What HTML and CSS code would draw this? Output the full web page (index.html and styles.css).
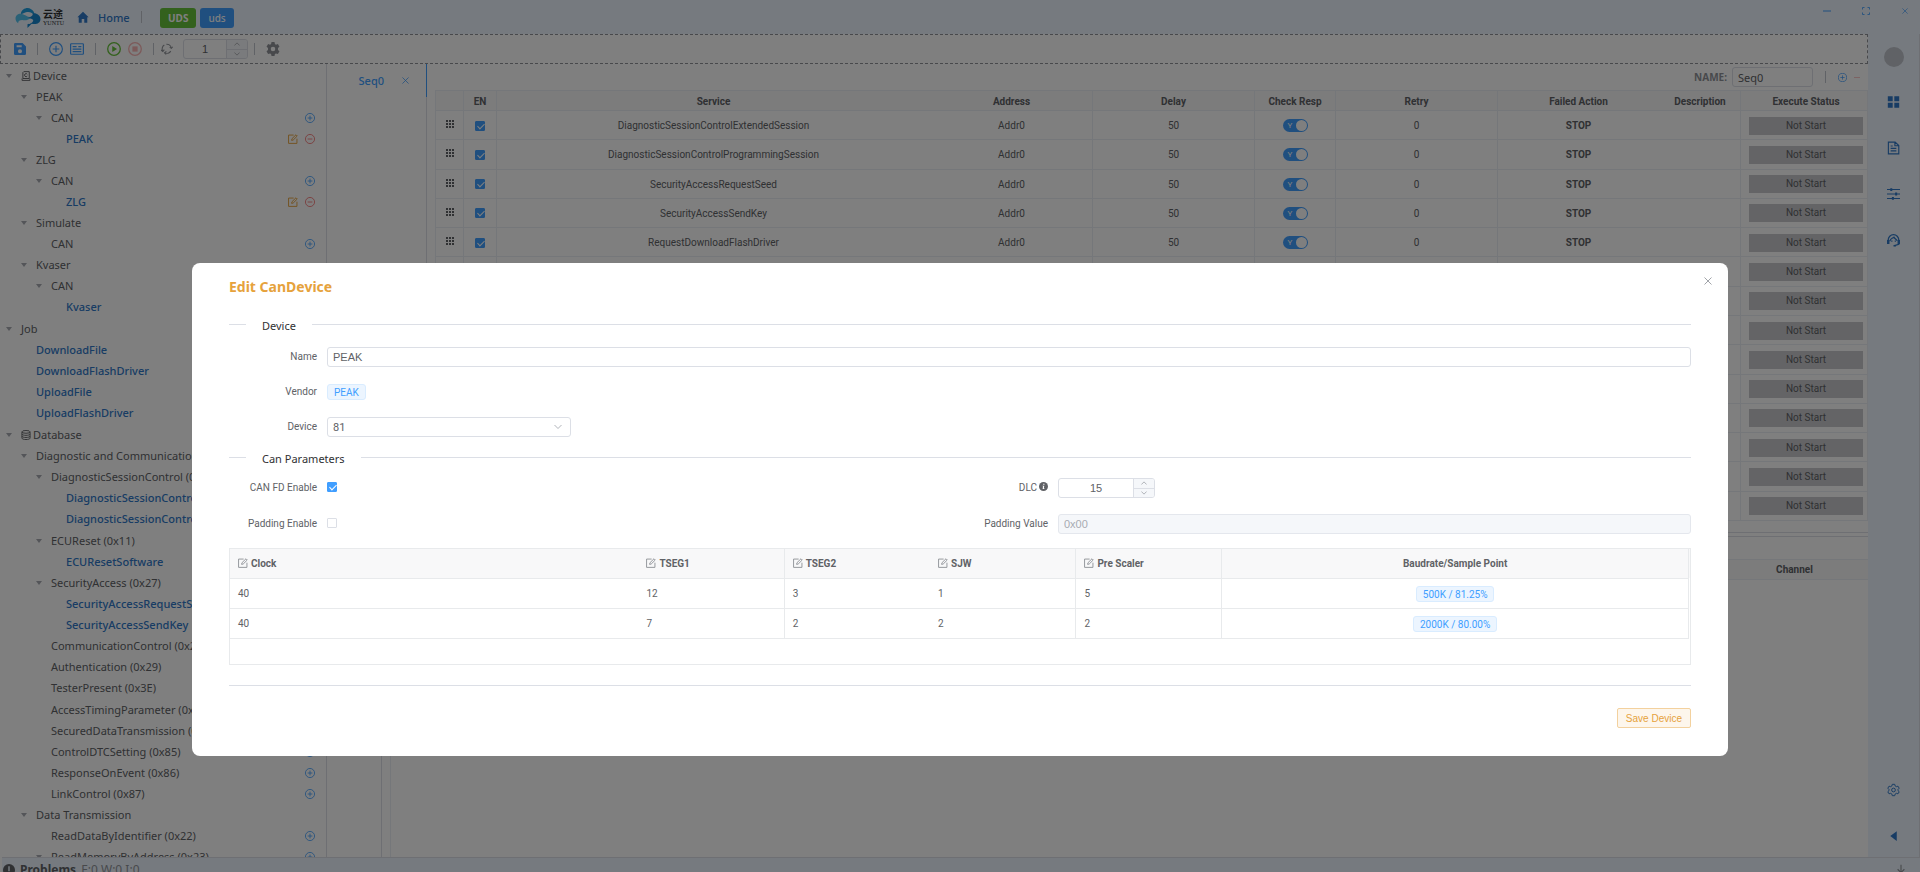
FILE: index.html
```
<!DOCTYPE html>
<html lang="en">
<head>
    <meta charset="UTF-8">
    <meta name="viewport" content="width=device-width, initial-scale=1.0">
    <title>Edit CanDevice</title>
    <link rel="stylesheet" href="styles.css">
</head>
<body>
    <!-- Icon set -->
    <svg class="sprite" aria-hidden="true">
        <symbol id="i-home" viewBox="0 0 16 16"><path fill="currentColor" d="M8 1 .5 8.200h1.800V15.500h4v-5h3.400v5h4V8.200h1.800z"/></symbol>
        <symbol id="i-save" viewBox="1 1 14 14"><path fill="currentColor" fill-rule="evenodd" d="M2.500 1H11l4 4v8.500a1.500 1.500 0 0 1-1.500 1.500h-11A1.500 1.500 0 0 1 1 13.500v-11A1.500 1.500 0 0 1 2.500 1zM4 3.500v2.500h6V3.500zm4 4.700a2.400 2.400 0 1 0 0 4.800 2.400 2.400 0 0 0 0-4.800z"/></symbol>
        <symbol id="i-plus" viewBox="0 0 16 16"><g fill="none" stroke="currentColor" stroke-width="1.300"><circle cx="8" cy="8" r="7.300"/><path d="M8 4.200v7.600M4.200 8h7.600"/></g></symbol>
        <symbol id="i-minus" viewBox="0 0 16 16"><g fill="none" stroke="currentColor" stroke-width="1.300"><circle cx="8" cy="8" r="7.300"/><path d="M4.200 8h7.600"/></g></symbol>
        <symbol id="i-card" viewBox="0 0 16 16"><g fill="none" stroke="currentColor" stroke-width="1.400"><rect x=".7" y="2" width="14.600" height="12" rx=".8"/><path d="M3 5.200h4.500M3 8.200h10M3 11h10M9.500 5.200H13"/></g></symbol>
        <symbol id="i-play" viewBox="0 0 16 16"><circle cx="8" cy="8" r="7.200" fill="none" stroke="currentColor" stroke-width="1.500"/><path fill="currentColor" d="M6 4.500v7L11.500 8z"/></symbol>
        <symbol id="i-stop" viewBox="0 0 16 16"><circle cx="8" cy="8" r="7.200" fill="none" stroke="currentColor" stroke-width="1.500"/><path fill="currentColor" d="M5 5h6v6H5z"/></symbol>
        <symbol id="i-cycle" viewBox="1 1 14.500 14.500"><g fill="none" stroke="currentColor" stroke-width="1.300"><path d="M3.200 11A5.500 5.500 0 0 1 5 3.400M7.500 2.500a5.500 5.500 0 0 1 5.900 4.800M12.800 10.800a5.500 5.500 0 0 1-7.300 2"/><path d="M1 9.500 3.200 11.300 5 9M11.500 6l2 1.500L15.200 5.500M7.500 11.200 5.300 12.900l1.900 2"/></g></symbol>
        <symbol id="i-gear" viewBox="0 0 16 16"><path fill="currentColor" fill-rule="evenodd" d="M6.300 0h3.400l.5 2.300 1.200.7L13.600 2.300l1.800 3-1.700 1.600v2.200l1.700 1.600-1.800 3-2.200-.7-1.200.7L9.700 16H6.300l-.5-2.300-1.200-.7-2.200.7-1.800-3 1.700-1.600V6.900L.6 5.300l1.800-3 2.200.7 1.200-.7zM8 5.400a2.600 2.600 0 1 0 0 5.200 2.600 2.600 0 0 0 0-5.200z"/></symbol>
        <symbol id="i-setting" viewBox="0 0 16 16"><g fill="none" stroke="currentColor" stroke-width="1.200"><path d="M6.500 1h3l.5 2 1.500.9 2-.6 1.500 2.500L13.600 7.200v1.700l1.400 1.300-1.500 2.500-2-.6-1.500.9-.5 2h-3l-.5-2-1.500-.9-2 .6L1 10.200l1.400-1.300V7.200L1 5.800l1.500-2.500 2 .6L6 3z"/><circle cx="8" cy="8" r="2.300"/></g></symbol>
        <symbol id="i-edit" viewBox="0 0 16 16"><g fill="none" stroke="currentColor" stroke-width="1.500"><path d="M9 1.700H.9v13.300H14.300V7.500M5.800 10.200l.5-2.600 6.500-6.400 2 2-6.500 6.400z"/></g></symbol>
        <symbol id="i-chip" viewBox="0 0 16 16"><g fill="none" stroke="currentColor" stroke-width="1.500"><path d="M3 12V2.500L4.500 1h8.700v11z"/><path d="M1.700 12v3h12.600v-3M10 5.200A2.400 2.400 0 1 0 10 8"/></g></symbol>
        <symbol id="i-db" viewBox="0 0 16 16"><g fill="none" stroke="currentColor" stroke-width="1.500"><ellipse cx="8" cy="3" rx="6.500" ry="2.200"/><path d="M1.500 3v10c0 3 13 3 13 0V3M1.500 6.300c0 3 13 3 13 0M1.500 9.700c0 3 13 3 13 0"/></g></symbol>
        <symbol id="i-close" viewBox="0 0 16 16"><path fill="none" stroke="currentColor" stroke-width="1.700" d="m1 1 14 14M15 1 1 15"/></symbol>
        <symbol id="i-line" viewBox="0 0 16 16"><path fill="none" stroke="currentColor" stroke-width="2" d="M0 8h16"/></symbol>
        <symbol id="i-full" viewBox="0 0 16 16"><path fill="none" stroke="currentColor" stroke-width="1.700" d="M1 5V1h4M11 1h4v4M15 11v4h-4M5 15H1v-4"/></symbol>
        <symbol id="i-drag" viewBox="0 0 8 8"><path fill="currentColor" d="M0 0h2v2H0zM3 0h2v2H3zM6 0h2v2H6zM0 3h2v2H0zM3 3h2v2H3zM6 3h2v2H6zM0 6h2v2H0zM3 6h2v2H3zM6 6h2v2H6z"/></symbol>
        <symbol id="i-grid" viewBox="0 0 16 16"><path fill="currentColor" d="M1 1h6v6H1zM9 1h6v6H9zM1 9h6v6H1zM9 9h6v6H9z"/></symbol>
        <symbol id="i-doc" viewBox="0 0 16 16"><path fill="none" stroke="currentColor" stroke-width="1.400" d="M1.700.8h8.300L14.500 5v10.200H1.700zM9.700 1v4.200h4.500M4.500 5.500H7M4.500 8.500h7M4.500 11.500h7"/></symbol>
        <symbol id="i-sliders" viewBox="0 0 16 16"><path fill="none" stroke="currentColor" stroke-width="1.300" d="M0 2.500h16M0 8h16M0 13.500h16"/><path fill="currentColor" d="M4 .8h2.500v3.400H4zM10 6.300h2.500v3.400H10zM6 11.800h2.500v3.400H6z"/></symbol>
        <symbol id="i-service" viewBox="0 0 16 16"><g fill="none" stroke="currentColor" stroke-width="1.600"><path d="M1.500 12.500V8a6.500 6.500 0 0 1 13 0v5.300L9 15M3.500 9.500C4 6 6 6.500 8.500 4.500c1 2 3 2.500 4 4.500"/></g><path fill="currentColor" d="M0 8h3v5H0zM13 8h3v5h-3zM5.200 8.500h1.500V10H5.200zM9.500 8.500H11V10H9.500zM8 14h3v2H8z"/></symbol>
        <symbol id="i-left" viewBox="0 0 16 16"><path fill="currentColor" d="M12 2v12L4 8z"/></symbol>
        <symbol id="i-up" viewBox="0 0 16 16"><path fill="none" stroke="currentColor" stroke-width="1.800" d="m1 12 7-7 7 7"/></symbol>
        <symbol id="i-down" viewBox="0 0 16 16"><path fill="none" stroke="currentColor" stroke-width="1.800" d="m1 4 7 7 7-7"/></symbol>
        <symbol id="i-info" viewBox="0 0 16 16"><circle cx="8" cy="8" r="8" fill="currentColor"/><path fill="#fff" d="M7.500 3h2.200v2H7.500zM6.200 6.500h3.200l-.8 4.800h1v1.200H6.400l.8-4.800h-1z"/></symbol>
        <symbol id="i-warn" viewBox="0 0 16 16"><circle cx="8" cy="8" r="8" fill="currentColor"/><path fill="#ecf5ff" d="M7 3h2v6.500H7zM7 11h2v2H7z"/></symbol>
        <symbol id="i-download" viewBox="0 0 16 16"><path fill="none" stroke="currentColor" stroke-width="1.500" d="M8 1v10M3.500 7 8 11.500 12.500 7M2 15h12"/></symbol>
    </svg>

    <header class="top-bar">
        <div class="logo">
            <svg viewBox="0 0 50 40">
                <path fill="#1f9fe0" d="M11 13C13 3 24-1 31 4c5 3 7 7 6 12-3-5-9-8-16-6-4 1-7 4-10 3z"/>
                <path fill="#55c3ee" d="M1 22c0-8 8-11 15-8 7 2 9 7 16 4-5 8-13 8-18 7-5 0-8 2-8 6-3-2-5-5-5-9z"/>
                <path fill="#1787cf" d="M24 21c6-1 11-4 10-9 8-1 15 4 15 11 0 9-9 11-17 9l-8 8v-7c5 0 11-3 11-8-3-3-7-4-11-4z"/>
            </svg>
            <div class="logo-name"><b>云途</b><small>YUNTU</small></div>
        </div>
        <a class="home" href="#"><svg><use href="#i-home"/></svg>Home</a>
        <span class="bar-line"></span>
        <div class="projects">
            <button class="project green">UDS</button>
            <button class="project blue">uds</button>
        </div>
        <div class="window-btns">
            <button aria-label="Minimize"><svg><use href="#i-line"/></svg></button>
            <button aria-label="Maximize"><svg><use href="#i-full"/></svg></button>
            <button aria-label="Close"><svg><use href="#i-close"/></svg></button>
        </div>
    </header>

    <div class="body">
        <div class="work">
            <div class="toolbar">
                <button class="tool blue" aria-label="Save"><svg class="sm"><use href="#i-save"/></svg></button>
                <span class="bar-line"></span>
                <button class="tool blue" aria-label="Add"><svg><use href="#i-plus"/></svg></button>
                <button class="tool blue" aria-label="List"><svg><use href="#i-card"/></svg></button>
                <span class="bar-line"></span>
                <button class="tool green" aria-label="Run"><svg><use href="#i-play"/></svg></button>
                <button class="tool red" aria-label="Stop" disabled><svg><use href="#i-stop"/></svg></button>
                <span class="bar-line"></span>
                <div class="cycles">
                    <span class="tool gray"><svg class="sm"><use href="#i-cycle"/></svg></span>
                    <div class="number small">
                        <input type="number" value="1" aria-label="Cycles">
                        <div class="steps">
                            <button aria-label="Increase"><svg><use href="#i-up"/></svg></button>
                            <button aria-label="Decrease"><svg><use href="#i-down"/></svg></button>
                        </div>
                    </div>
                </div>
                <span class="bar-line"></span>
                <button class="tool gray" aria-label="Settings"><svg><use href="#i-gear"/></svg></button>
            </div>

            <div class="panes">
                <nav class="tree" id="tree"></nav>

                <div class="editor">
                    <section class="seq-pane">
                        <div class="seq-tabs">
                            <button class="seq-tab">Seq0 <svg><use href="#i-close"/></svg></button>
                        </div>
                        <div class="seq-content">
                            <div class="seq-head">
                                <label for="seqName">NAME:</label>
                                <input type="text" id="seqName" value="Seq0">
                                <span class="bar-line"></span>
                                <button class="seq-btn blue" aria-label="Add"><svg><use href="#i-plus"/></svg></button>
                                <button class="seq-btn red" aria-label="Remove" disabled><svg><use href="#i-line"/></svg></button>
                            </div>
                            <table class="seq-table">
                                <colgroup>
                                    <col class="c-drag"><col class="c-en"><col><col class="c-mid"><col class="c-mid"><col class="c-short"><col class="c-mid"><col class="c-mid"><col class="c-short"><col class="c-status">
                                </colgroup>
                                <thead>
                                    <tr><th></th><th>EN</th><th class="open">Service</th><th>Address</th><th>Delay</th><th>Check Resp</th><th>Retry</th><th class="open">Failed Action</th><th>Description</th><th class="last">Execute Status</th></tr>
                                </thead>
                                <tbody id="seqRows"></tbody>
                            </table>
                        </div>
                    </section>
                    <section class="log-pane">
                        <div class="log-tabs"></div>
                        <div class="log-content">
                            <table class="log-table">
                                <colgroup><col><col class="c-channel"></colgroup>
                                <thead><tr><th></th><th>Channel</th></tr></thead>
                            </table>
                        </div>
                    </section>
                </div>
            </div>
        </div>

        <aside class="side-bar">
            <span class="avatar"></span>
            <button aria-label="Apps"><svg><use href="#i-grid"/></svg></button>
            <button aria-label="Document"><svg><use href="#i-doc"/></svg></button>
            <button aria-label="Options"><svg><use href="#i-sliders"/></svg></button>
            <button aria-label="Support"><svg><use href="#i-service"/></svg></button>
            <div class="side-bottom">
                <button aria-label="Settings"><svg><use href="#i-setting"/></svg></button>
                <button aria-label="Collapse"><svg><use href="#i-left"/></svg></button>
            </div>
        </aside>
    </div>

    <footer class="status-bar">
        <svg><use href="#i-warn"/></svg>
        <b>Problems</b>
        <span>E:0 W:0 I:0</span>
        <button aria-label="Download"><svg><use href="#i-download"/></svg></button>
    </footer>

    <div class="overlay">
        <form class="dialog" role="dialog" aria-labelledby="dialogTitle">
            <button type="button" class="dialog-close" aria-label="Close"><svg><use href="#i-close"/></svg></button>
            <h2 id="dialogTitle">Edit CanDevice</h2>

            <div class="divider"><span>Device</span></div>
            <div class="fields">
                <div class="field">
                    <label for="name">Name</label>
                    <input type="text" id="name" value="PEAK">
                </div>
                <div class="field">
                    <span class="label">Vendor</span>
                    <span class="tag">PEAK</span>
                </div>
                <div class="field">
                    <label for="device">Device</label>
                    <div class="select">
                        <select id="device"><option>81</option></select>
                        <svg><use href="#i-down"/></svg>
                    </div>
                </div>
            </div>

            <div class="divider"><span>Can Parameters</span></div>
            <div class="fields two">
                <div class="field">
                    <label for="canFd">CAN FD Enable</label>
                    <input type="checkbox" id="canFd" checked>
                </div>
                <div class="field">
                    <label for="dlc">DLC<svg><use href="#i-info"/></svg></label>
                    <div class="number">
                        <input type="number" id="dlc" value="15">
                        <div class="steps">
                            <button type="button" aria-label="Increase"><svg><use href="#i-up"/></svg></button>
                            <button type="button" aria-label="Decrease"><svg><use href="#i-down"/></svg></button>
                        </div>
                    </div>
                </div>
                <div class="field">
                    <label for="padding">Padding Enable</label>
                    <input type="checkbox" id="padding">
                </div>
                <div class="field">
                    <label for="paddingValue">Padding Value</label>
                    <input type="text" id="paddingValue" value="0x00" disabled>
                </div>
            </div>

            <div class="baud-box">
                <table class="baud-table">
                    <thead>
                        <tr>
                            <th class="clock open"><svg><use href="#i-edit"/></svg>Clock</th>
                            <th><svg><use href="#i-edit"/></svg>TSEG1</th>
                            <th class="open"><svg><use href="#i-edit"/></svg>TSEG2</th>
                            <th><svg><use href="#i-edit"/></svg>SJW</th>
                            <th><svg><use href="#i-edit"/></svg>Pre Scaler</th>
                            <th class="rate">Baudrate/Sample Point</th>
                        </tr>
                    </thead>
                    <tbody>
                        <tr><td class="open">40</td><td>12</td><td class="open">3</td><td>1</td><td>5</td><td class="rate"><span class="tag">500K / 81.25%</span></td></tr>
                        <tr><td class="open">40</td><td>7</td><td class="open">2</td><td>2</td><td>2</td><td class="rate"><span class="tag">2000K / 80.00%</span></td></tr>
                    </tbody>
                </table>
            </div>

            <hr>
            <div class="dialog-footer"><button type="submit" class="save-btn">Save Device</button></div>
        </form>
    </div>

    <script src="script.js"></script>
</body>
</html>
```
FILE: styles.css
```
* {
    margin: 0;
    padding: 0;
    box-sizing: border-box;
}

body {
    height: 100vh;
    display: flex;
    flex-direction: column;
    overflow: hidden;
    background: #fff;
    color: #606266;
    font-family: 'Noto Sans', 'Noto Sans CJK SC', sans-serif;
    font-size: 11px;
}

button,
input,
select {
    font: inherit;
    color: inherit;
    background: none;
    border: none;
    outline: none;
}

button {
    cursor: pointer;
}

svg {
    display: block;
    flex: none;
}

.sprite {
    position: absolute;
    width: 0;
    height: 0;
}

.blue { color: #409eff; }
.green { color: #67c23a; }
.red { color: #f56c6c; }
.orange { color: #e6a23c; }
.gray { color: #909399; }
button:disabled { opacity: 0.5; }

.bar-line {
    width: 1px;
    height: 12px;
    background: #c0c4cc;
}

/* Top bar */
.top-bar {
    flex: none;
    height: 34px;
    padding: 0 8px 0 15px;
    display: flex;
    align-items: center;
    background: #ecf5ff;
}

.logo {
    display: flex;
    align-items: center;
    gap: 2px;
    width: 62px;
}

.logo > svg {
    width: 26px;
    height: 21px;
}

.logo-name {
    display: flex;
    flex-direction: column;
    color: #303133;
}

.logo-name b {
    font-size: 10px;
    line-height: 11px;
}

.logo-name small {
    font-family: 'Liberation Serif', serif;
    font-size: 6px;
    line-height: 6px;
}

.home {
    width: 64px;
    display: flex;
    align-items: center;
    gap: 9px;
    font-weight: 500;
    color: #3078c8;
    text-decoration: none;
}

.home svg {
    width: 12px;
    height: 12px;
}

.projects {
    display: flex;
    gap: 4px;
    margin: 2px 0 0 18px;
}

.project {
    height: 20px;
    padding: 0 8px;
    border-radius: 3px;
    color: #fff;
    font-size: 10px;
}

.project.green {
    background: #67c23a;
    font-weight: 700;
}

.project.blue {
    background: #409eff;
    font-weight: 500;
}

.window-btns {
    display: flex;
    gap: 25px;
    margin-left: auto;
    align-self: flex-start;
    color: #409eff;
}

.window-btns button {
    width: 14px;
    height: 22px;
}

.window-btns svg {
    width: 8px;
    height: 8px;
    margin: 0 auto;
}

.window-btns button:last-child svg {
    width: 6px;
}

/* Toolbar */
.body {
    flex: 1;
    min-height: 0;
    display: flex;
}

.work {
    flex: 1;
    min-width: 0;
    display: flex;
    flex-direction: column;
}

.toolbar {
    flex: none;
    height: 30px;
    padding: 0 13px;
    display: flex;
    align-items: center;
    gap: 11px;
    border: 1px dashed #909399;
}

.tool svg {
    width: 14px;
    height: 14px;
}

.tool svg.sm {
    width: 12px;
    height: 12px;
}

.tool + .tool {
    margin-left: -4px;
}

.cycles {
    display: flex;
    align-items: center;
    gap: 10px;
    margin: 0 -5px 0 -4px;
}

.number {
    display: flex;
    width: 97px;
    height: 20px;
    border: 1px solid #dcdfe6;
    border-radius: 3px;
    overflow: hidden;
}

.number.small {
    width: 65px;
}

.number input {
    flex: 1;
    min-width: 0;
    text-align: center;
    font-family: 'Liberation Sans', sans-serif;
    appearance: textfield;
}

.number input::-webkit-inner-spin-button {
    appearance: none;
}

.steps {
    width: 21px;
    display: flex;
    flex-direction: column;
    border-left: 1px solid #dcdfe6;
    background: #f5f7fa;
    color: #909399;
}

.steps button {
    flex: 1;
    display: flex;
    align-items: center;
    justify-content: center;
}

.steps button + button {
    border-top: 1px solid #dcdfe6;
}

.steps svg {
    width: 6px;
    height: 6px;
}

/* Tree */
.panes {
    flex: 1;
    min-height: 0;
    display: flex;
}

.tree {
    width: 327px;
    padding-top: 1px;
    overflow: hidden;
    border-right: 1px solid #dcdfe6;
}

.tree ul {
    list-style: none;
    margin-bottom: 1px;
}

.node {
    height: 21px;
    padding: 0 11px 0 6px;
    display: flex;
    align-items: center;
    white-space: nowrap;
}

.node.leaf {
    color: #3078c8;
    font-weight: 500;
}

.d1 { padding-left: 21px; }
.d2 { padding-left: 36px; }
.d3 { padding-left: 51px; }

.arrow {
    flex: none;
    width: 15px;
}

.arrow.open::before {
    content: '';
    display: block;
    width: 0;
    border: 3px solid transparent;
    border-top: 4px solid #a8abb2;
    border-bottom: none;
}

.node > svg {
    width: 10px;
    height: 10px;
    margin-right: 2px;
}

.node-btns {
    margin-left: auto;
    display: flex;
    gap: 7px;
}

.node-btns svg {
    width: 10px;
    height: 10px;
}

/* Sequence editor */
.editor {
    flex: 1;
    min-width: 0;
    display: flex;
    flex-direction: column;
}

.seq-pane {
    height: 469px;
    display: flex;
    border-bottom: 1px solid #dcdfe6;
}

.seq-tabs {
    width: 100px;
    border-right: 1px solid #dcdfe6;
}

.seq-tab {
    width: 100px;
    height: 33px;
    padding-right: 17px;
    display: flex;
    align-items: center;
    justify-content: flex-end;
    gap: 18px;
    border-right: 1px solid #409eff;
    color: #409eff;
    font-weight: 500;
}

.seq-tab svg {
    width: 7px;
    height: 7px;
}

.seq-content {
    flex: 1;
    min-width: 0;
    padding-left: 8px;
}

.seq-head {
    height: 26px;
    padding-right: 8px;
    display: flex;
    align-items: center;
    justify-content: flex-end;
}

.seq-head label {
    color: #909399;
    font-weight: 700;
    font-size: 10px;
    margin-right: 5px;
}

.seq-head input {
    width: 81px;
    height: 20px;
    margin-right: 12px;
    padding: 0 5px;
    border: 1px solid #dcdfe6;
    border-radius: 3px;
}

.seq-head .bar-line {
    margin-right: 12px;
}

.seq-btn {
    margin-right: 7px;
}

.seq-btn svg {
    width: 9px;
    height: 9px;
}

.seq-btn.red {
    margin-right: 0;
}

.seq-btn.red svg {
    width: 6px;
}

.seq-table,
.log-table,
.baud-table {
    width: 100%;
    border-collapse: collapse;
    table-layout: fixed;
    font-family: Roboto, sans-serif;
    font-size: 10px;
}

.seq-table {
    height: 431px;
    text-align: center;
}

.seq-table th,
.seq-table td {
    padding-top: 1px;
    border: 1px solid #ebeef5;
}

.seq-table th,
.log-table th {
    height: 20px;
    background: #f8f8f9;
}

.seq-table .open {
    border-right-color: transparent;
}

.seq-table .last {
    padding-left: 4px;
}

.c-drag { width: 28px; }
.c-en { width: 33px; }
.c-mid { width: 162px; }
.c-short { width: 81px; }
.c-status { width: 127px; }

.seq-table td svg {
    width: 8px;
    height: 8px;
    margin: 0 auto 3px;
}

input[type="checkbox"] {
    appearance: none;
    width: 10px;
    height: 10px;
    display: block;
    border: 1px solid #dcdfe6;
    border-radius: 1px;
    background: #fff;
}

input[type="checkbox"]:checked {
    background: #409eff;
    border-color: #409eff;
}

input[type="checkbox"]:checked::after {
    content: '';
    display: block;
    width: 3px;
    height: 6px;
    margin-left: 3px;
    border: solid #fff;
    border-width: 0 1px 1px 0;
    transform: rotate(45deg);
}

.seq-table input {
    margin: 0 auto;
}

.switch {
    width: 25px;
    height: 13px;
    margin: 0 auto;
    padding: 1px 1px 1px 5px;
    display: flex;
    align-items: center;
    justify-content: space-between;
    border-radius: 7px;
    background: #409eff;
    color: #fff;
    font-size: 8px;
    line-height: 11px;
}

.switch input[type="checkbox"] {
    width: 11px;
    height: 11px;
    margin: 0;
    border: none;
    border-radius: 50%;
    background: #fff;
}

.switch input[type="checkbox"]::after {
    display: none;
}

.status {
    width: 114px;
    height: 18px;
    margin: 0 auto;
    line-height: 18px;
    background: #c8c9cc;
}

.log-pane {
    flex: 1;
    min-height: 0;
    margin-top: 3px;
    display: flex;
    border-top: 1px solid #dcdfe6;
}

.log-tabs {
    width: 55px;
    border-right: 1px solid #dcdfe6;
}

.log-content {
    flex: 1;
    margin-left: 8px;
    padding-top: 22px;
    border-left: 1px solid #ebeef5;
}

.log-table th {
    border: solid #ebeef5;
    border-width: 1px 0;
}

.c-channel { width: 147px; }

/* Side bar */
.side-bar {
    width: 52px;
    padding: 13px 0 14px;
    display: flex;
    flex-direction: column;
    align-items: center;
    gap: 32px;
    background: #ecf5ff;
    border-right: 1px solid #dcdfe6;
    color: #3078c8;
}

.avatar {
    width: 20px;
    height: 20px;
    margin-bottom: -4px;
    border-radius: 50%;
    background: #c0c4cc;
}

.side-bar svg {
    width: 13px;
    height: 14px;
}

.side-bottom {
    margin-top: auto;
    display: flex;
    flex-direction: column;
    gap: 32px;
}

/* Status bar */
.status-bar {
    flex: none;
    height: 26px;
    margin: 0 0 -11px 2px;
    padding: 0 13px 2px 1px;
    display: flex;
    align-items: center;
    gap: 5px;
    border-top: 1px solid #dcdfe6;
    background: #ecf5ff;
    color: #909399;
    font-size: 12px;
}

.status-bar > svg {
    width: 12px;
    height: 12px;
    color: #606266;
}

.status-bar b {
    color: #606266;
}

.status-bar button {
    margin-left: auto;
}

.status-bar button svg {
    width: 12px;
    height: 12px;
}

/* Dialog */
.overlay {
    position: fixed;
    inset: 0;
    padding-top: 263px;
    background: rgba(0, 0, 0, 0.5);
}

.dialog {
    position: relative;
    width: 80%;
    margin: 0 auto;
    padding: 13px 37px 28px;
    border-radius: 8px;
    background: #fff;
}

.dialog h2 {
    font-size: 14px;
    line-height: 22px;
    color: #e6a23c;
}

.dialog-close {
    position: absolute;
    top: 14px;
    right: 16px;
    color: #909399;
}

.dialog-close svg {
    width: 8px;
    height: 8px;
}

.divider {
    display: flex;
    align-items: center;
    gap: 16px;
    height: 18px;
    margin-top: 17px;
    color: #303133;
}

.divider span {
    padding-top: 2px;
}

.divider::before,
.divider::after {
    content: '';
    width: 17px;
    height: 1px;
    background: #dcdfe6;
}

.divider::after {
    flex: 1;
}

.fields {
    display: grid;
    gap: 15px;
    margin-top: 14px;
}

.fields + .divider {
    margin-top: 11px;
}

.fields.two {
    grid-template-columns: 1fr 1fr;
    gap: 16px 0;
    margin-top: 12px;
}

.field {
    height: 20px;
    display: flex;
    align-items: center;
    gap: 10px;
}

.field label,
.field .label {
    width: 88px;
    padding-bottom: 2px;
    display: flex;
    justify-content: flex-end;
    font-family: Roboto, sans-serif;
    font-size: 10px;
}

.field label svg {
    width: 9px;
    height: 9px;
    margin-left: 2px;
}

.field input[type="text"] {
    flex: 1;
    height: 20px;
    padding: 0 5px;
    border: 1px solid #dcdfe6;
    border-radius: 3px;
    font-family: 'Liberation Sans', sans-serif;
}

.field input:disabled {
    background: #f5f7fa;
    border-color: #e4e7ed;
    color: #a8abb2;
}

.field input[type="checkbox"] {
    margin-bottom: 2px;
}

.select {
    width: 244px;
    height: 20px;
    padding-right: 8px;
    display: flex;
    align-items: center;
    border: 1px solid #dcdfe6;
    border-radius: 3px;
}

.select select {
    flex: 1;
    padding-left: 5px;
    appearance: none;
    font-family: Roboto, sans-serif;
}

.select svg {
    width: 8px;
    height: 8px;
    color: #a8abb2;
}

.tag {
    display: inline-block;
    height: 16px;
    padding: 0 6px;
    border: 1px solid #d9ecff;
    border-radius: 3px;
    background: #ecf5ff;
    color: #409eff;
    font-family: Roboto, sans-serif;
    font-size: 10px;
    line-height: 15px;
}

.baud-box {
    min-height: 117px;
    margin-top: 14px;
    padding-right: 1px;
    border: 1px solid #e8eaec;
    background: linear-gradient(#f8f8f9 29px, #fff 29px);
}

.baud-table th,
.baud-table td {
    height: 30px;
    padding: 1px 0 0 8px;
    border: solid #e8eaec;
    border-width: 0 1px 1px 0;
    text-align: left;
}

.baud-table th {
    height: 29px;
}

.baud-table .open {
    border-right: none;
}

.baud-table .clock {
    width: 28%;
}

.baud-table .rate {
    width: 32%;
    padding-left: 0;
    text-align: center;
}

.baud-table th svg {
    display: inline-block;
    width: 10px;
    height: 10px;
    margin-right: 3px;
    vertical-align: -1px;
    color: #909399;
}

hr {
    margin-top: 20px;
    border: none;
    border-top: 1px solid #dcdfe6;
}

.dialog-footer {
    display: flex;
    justify-content: flex-end;
    margin-top: 22px;
}

.save-btn {
    height: 20px;
    padding: 0 8px;
    border: 1px solid #f3d19e;
    border-radius: 2px;
    background: #fdf6ec;
    color: #e6a23c;
    font-family: 'Liberation Sans', sans-serif;
    font-size: 10px;
}
```
FILE: script.js
```
const icon = name => `<svg><use href="#i-${name}"/></svg>`;

// [depth, text, kind]; kinds: open = expanded, add = plus button, dev = edit + remove, leaf = link item
const groups = [
    [
        [0, 'Device', 'open chip'],
        [1, 'PEAK', 'open'], [2, 'CAN', 'open add'], [3, 'PEAK', 'leaf dev'],
        [1, 'ZLG', 'open'], [2, 'CAN', 'open add'], [3, 'ZLG', 'leaf dev'],
        [1, 'Simulate', 'open'], [2, 'CAN', 'add'],
        [1, 'Kvaser', 'open'], [2, 'CAN', 'open add'], [3, 'Kvaser', 'leaf dev']
    ],
    [
        [0, 'Job', 'open'],
        [1, 'DownloadFile', 'leaf'], [1, 'DownloadFlashDriver', 'leaf'],
        [1, 'UploadFile', 'leaf'], [1, 'UploadFlashDriver', 'leaf']
    ],
    [
        [0, 'Database', 'open db'],
        [1, 'Diagnostic and Communication', 'open'],
        [2, 'DiagnosticSessionControl (0x10)', 'open add'],
        [3, 'DiagnosticSessionControl', 'leaf dev'],
        [3, 'DiagnosticSessionControl', 'leaf dev']
    ],
    [
        [2, 'ECUReset (0x11)', 'open add'], [3, 'ECUResetSoftware', 'leaf dev'],
        [2, 'SecurityAccess (0x27)', 'open add'],
        [3, 'SecurityAccessRequestSeed', 'leaf dev'], [3, 'SecurityAccessSendKey', 'leaf dev'],
        [2, 'CommunicationControl (0x28)', 'add'], [2, 'Authentication (0x29)', 'add'],
        [2, 'TesterPresent (0x3E)', 'add']
    ],
    [
        [2, 'AccessTimingParameter (0x83)', 'add'],
        [2, 'SecuredDataTransmission (0x84)', 'add'], [2, 'ControlDTCSetting (0x85)', 'add'],
        [2, 'ResponseOnEvent (0x86)', 'add'], [2, 'LinkControl (0x87)', 'add'],
        [1, 'Data Transmission', 'open'], [2, 'ReadDataByIdentifier (0x22)', 'add'],
        [2, 'ReadMemoryByAddress (0x23)', 'open add']
    ]
];

function treeNode([depth, text, kind]) {
    const has = k => kind.split(' ').includes(k);
    let btns = '';
    if (has('add')) btns = `<button class="blue" aria-label="Add">${icon('plus')}</button>`;
    if (has('dev')) {
        btns = `<button class="orange" aria-label="Edit">${icon('edit')}</button>
                <button class="red" aria-label="Remove">${icon('minus')}</button>`;
    }
    return `<li class="node d${depth} ${has('leaf') ? 'leaf' : ''}">
        <span class="arrow ${has('open') ? 'open' : ''}"></span>
        ${has('chip') ? icon('chip') : ''}${has('db') ? icon('db') : ''}
        <span>${text}</span><span class="node-btns">${btns}</span></li>`;
}

document.getElementById('tree').innerHTML =
    groups.map(g => `<ul>${g.map(treeNode).join('')}</ul>`).join('');

const services = [
    'DiagnosticSessionControlExtendedSession', 'DiagnosticSessionControlProgrammingSession',
    'SecurityAccessRequestSeed', 'SecurityAccessSendKey', 'RequestDownloadFlashDriver',
    '', '', '', '', '', '', '', '', ''
];

document.getElementById('seqRows').innerHTML = services.map(name => `
    <tr>
        <td>${icon('drag')}</td>
        <td><input type="checkbox" aria-label="Enable" checked></td>
        <td class="open">${name}</td>
        <td>Addr0</td>
        <td>50</td>
        <td><label class="switch">Y<input type="checkbox" checked></label></td>
        <td>0</td>
        <td class="open"><b>STOP</b></td>
        <td></td>
        <td class="last"><div class="status">Not Start</div></td>
    </tr>`).join('');
```
